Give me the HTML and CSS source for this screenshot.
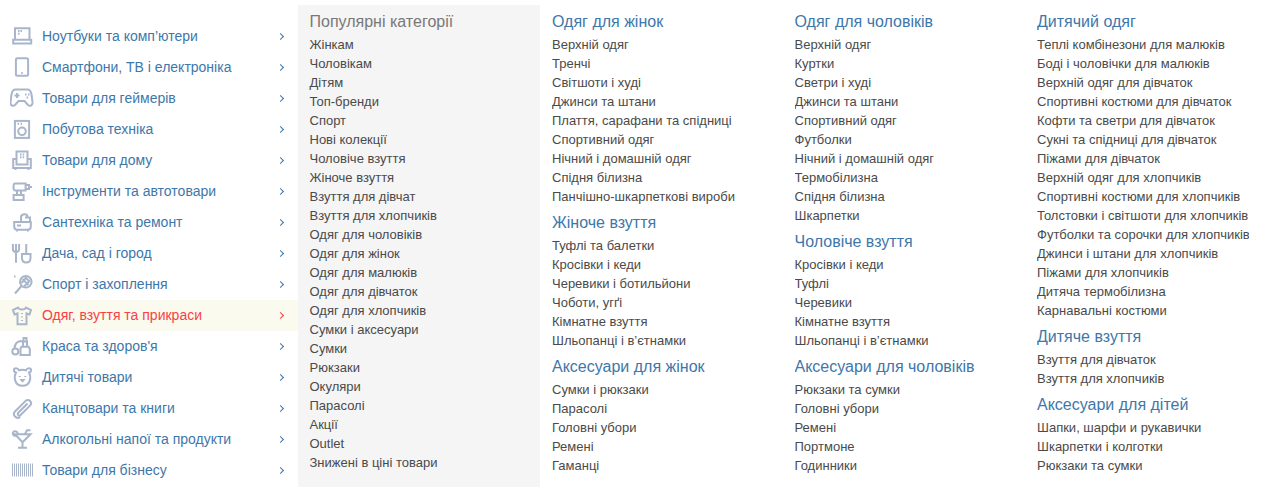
FILE: index.html
```html
<!DOCTYPE html>
<html lang="uk">
<head>
    <meta charset="UTF-8">
    <title>Каталог</title>
    <link rel="stylesheet" href="styles.css">
</head>
<body>
    <div class="menu">
        <ul class="sidebar">
            <li class="side-item">
                <svg class="side-icon" viewBox="0 0 24 24"><path d="M5 4.200h14.500v11.500H5zM3.200 15.700h18v3.800h-18zM8 7h1.500M10.500 7H12M8 9.700h1.500"/></svg>
                <a class="side-link">Ноутбуки та комп’ютери</a><span class="chev"></span>
            </li>
            <li class="side-item">
                <svg class="side-icon" viewBox="0 0 24 24"><rect x="5.900" y="3.200" width="12.200" height="17.600" rx="1.500"/><path d="M11.300 18h1.500"/></svg>
                <a class="side-link">Смартфони, ТВ і електроніка</a><span class="chev"></span>
            </li>
            <li class="side-item">
                <svg class="side-icon" viewBox="0 0 24 24"><path d="M5.500 3.500h12c2.500 0 3.500 2 4 5l1 7.500c.4 3-2.200 5-4.500 3l-3.500-4H8.500L5 19c-2.300 2-4.900 0-4.500-3l1-7.500c.5-3 1.500-5 4-5zM4.500 9.500h5M7 7v5M15 8.500h1.500M18 8.500h1.500M16.500 11.500H18"/></svg>
                <a class="side-link">Товари для геймерів</a><span class="chev"></span>
            </li>
            <li class="side-item">
                <svg class="side-icon" viewBox="0 0 24 24"><rect x="4.900" y="3.900" width="14.200" height="17"/><circle cx="12" cy="14.300" r="3.800"/><path d="M7.500 6.800H9M10.500 6.800H12"/></svg>
                <a class="side-link">Побутова техніка</a><span class="chev"></span>
            </li>
            <li class="side-item">
                <svg class="side-icon" viewBox="0 0 24 24"><path d="M6.500 11V3.600h11V11M3.200 11h3.300v5.500h11V11h3.300v9H3.200zM5.500 20v2M18.500 20v2M10 6.500h1.500M12.700 6.500h1.500M10 9.200h1.500M12.700 9.200h1.500"/></svg>
                <a class="side-link">Товари для дому</a><span class="chev"></span>
            </li>
            <li class="side-item">
                <svg class="side-icon" viewBox="0 0 24 24"><path d="M5 4.600h10.600v6.800H5c-2 0-2-6.800 0-6.800zM15.600 6h3.400v4h-3.400M19 8h3M7 11.400v4.500M11 11.400v4.500M3.600 15.900h10V21h-10z"/></svg>
                <a class="side-link">Інструменти та автотовари</a><span class="chev"></span>
            </li>
            <li class="side-item">
                <svg class="side-icon" viewBox="0 0 24 24"><path d="M4.200 12h16.600v4.500c0 2-1.300 3.300-3.300 3.300h-10c-2 0-3.300-1.300-3.300-3.300zM7 20v1.500M18 20v1.500M11 12V7.500c0-4 6-4.500 6.500-1M15 7.500h5V12M7 15.500h4"/></svg>
                <a class="side-link">Сантехніка та ремонт</a><span class="chev"></span>
            </li>
            <li class="side-item">
                <svg class="side-icon" viewBox="0 0 24 24"><path d="M2.900 3v5c0 2 1.500 3 3.100 3s3.100-1 3.100-3V3M6 3v18.700M12 13h8.500v4c0 3-1.800 4.500-4.250 4.500S12 20 12 17zM16.250 3v10"/></svg>
                <a class="side-link">Дача, сад і город</a><span class="chev"></span>
            </li>
            <li class="side-item">
                <svg class="side-icon" viewBox="0 0 24 24"><circle cx="15.800" cy="9.800" r="5.800"/><path d="M11.500 14L5 21.500M12.500 7l6 6M15 5l5 5M11.500 11l5-6M14 14.500l6-6M4 4.500h1.500"/></svg>
                <a class="side-link">Спорт і захоплення</a><span class="chev"></span>
            </li>
            <li class="side-item active">
                <svg class="side-icon" viewBox="0 0 24 24"><path d="M8 4.600L3 7l1.500 4.500 3-1v10.700h9V10.500l3 1L21 7l-5-2.400c-1 2.400-7 2.400-8 0zM12 10v1M12 13.500v1M12 17v1"/></svg>
                <a class="side-link">Одяг, взуття та прикраси</a><span class="chev"></span>
            </li>
            <li class="side-item">
                <svg class="side-icon" viewBox="0 0 24 24"><path d="M11.500 12.800h7l1.300 2v6.300H10.500v-6.300zM13 12.800V7.500h4v5.300M13.500 7.500V4h3v3.500"/><circle cx="5.300" cy="17.600" r="3"/><path d="M4.500 14.500c0-5 4-8.500 8.500-7"/></svg>
                <a class="side-link">Краса та здоров'я</a><span class="chev"></span>
            </li>
            <li class="side-item">
                <svg class="side-icon" viewBox="0 0 24 24"><path d="M6 7.500C3 6.500 3.500 3.200 6 3.200c1.500 0 2.500 1 3 2 2-.6 5-.6 7 0 .5-1 1.500-2 3-2 2.500 0 3 3.300 0 4.300 2.500 4.500 1.500 13.300-6.500 13.300S3.500 12 6 7.500zM9.700 11v1M15.300 11v1M11.500 15h2l-1 1.200z"/></svg>
                <a class="side-link">Дитячі товари</a><span class="chev"></span>
            </li>
            <li class="side-item">
                <svg class="side-icon" viewBox="0 0 24 24"><path d="M17.500 7.500L8.300 16.700c-1.700 1.700 .6 4 2.300 2.300L20 9.600c3-3-1.300-7.800-4.600-4.500L5.200 15.300c-3.500 3.500 1.300 8.700 5 5.400"/></svg>
                <a class="side-link">Канцтовари та книги</a><span class="chev"></span>
            </li>
            <li class="side-item">
                <svg class="side-icon" viewBox="0 0 24 24"><path d="M5 7.200h15.500l-8 8zM12.500 15.200v5.300M8 20.700h9M15 7l2-3.800h3.500M7.800 6.500C7.300 4.500 5 3.500 3.500 4.800 2 6.200 3 9 5.500 9"/></svg>
                <a class="side-link">Алкогольні напої та продукти</a><span class="chev"></span>
            </li>
            <li class="side-item">
                <svg class="side-icon thin" viewBox="0 0 24 24"><path d="M2.500 5.500v13M4.500 5.500v13M6.500 5.500v13M8.500 5.500v13M10.500 5.500v13M12.500 5.500v13M14.500 5.500v13M16.500 5.500v13M18.500 5.500v13M20.500 5.500v13M22.500 5.500v13"/></svg>
                <a class="side-link">Товари для бізнесу</a><span class="chev"></span>
            </li>
        </ul>

        <div class="popular">
            <h3 class="popular-title">Популярні категорії</h3>
            <ul class="links">
                <li>Жінкам</li>
                <li>Чоловікам</li>
                <li>Дітям</li>
                <li>Топ-бренди</li>
                <li>Спорт</li>
                <li>Нові колекції</li>
                <li>Чоловіче взуття</li>
                <li>Жіноче взуття</li>
                <li>Взуття для дівчат</li>
                <li>Взуття для хлопчиків</li>
                <li>Одяг для чоловіків</li>
                <li>Одяг для жінок</li>
                <li>Одяг для малюків</li>
                <li>Одяг для дівчаток</li>
                <li>Одяг для хлопчиків</li>
                <li>Сумки і аксесуари</li>
                <li>Сумки</li>
                <li>Рюкзаки</li>
                <li>Окуляри</li>
                <li>Парасолі</li>
                <li>Акції</li>
                <li>Outlet</li>
                <li>Знижені в ціні товари</li>
            </ul>
        </div>

        <div class="col">
            <h3 class="col-title">Одяг для жінок</h3>
            <ul class="links">
                <li>Верхній одяг</li>
                <li>Тренчі</li>
                <li>Світшоти і худі</li>
                <li>Джинси та штани</li>
                <li>Плаття, сарафани та спідниці</li>
                <li>Спортивний одяг</li>
                <li>Нічний і домашній одяг</li>
                <li>Спідня білизна</li>
                <li>Панчішно-шкарпеткові вироби</li>
            </ul>
            <h3 class="col-title">Жіноче взуття</h3>
            <ul class="links">
                <li>Туфлі та балетки</li>
                <li>Кросівки і кеди</li>
                <li>Черевики і ботильйони</li>
                <li>Чоботи, угґі</li>
                <li>Кімнатне взуття</li>
                <li>Шльопанці і в’єтнамки</li>
            </ul>
            <h3 class="col-title">Аксесуари для жінок</h3>
            <ul class="links">
                <li>Сумки і рюкзаки</li>
                <li>Парасолі</li>
                <li>Головні убори</li>
                <li>Ремені</li>
                <li>Гаманці</li>
            </ul>
        </div>

        <div class="col">
            <h3 class="col-title">Одяг для чоловіків</h3>
            <ul class="links">
                <li>Верхній одяг</li>
                <li>Куртки</li>
                <li>Светри і худі</li>
                <li>Джинси та штани</li>
                <li>Спортивний одяг</li>
                <li>Футболки</li>
                <li>Нічний і домашній одяг</li>
                <li>Термобілизна</li>
                <li>Спідня білизна</li>
                <li>Шкарпетки</li>
            </ul>
            <h3 class="col-title">Чоловіче взуття</h3>
            <ul class="links">
                <li>Кросівки і кеди</li>
                <li>Туфлі</li>
                <li>Черевики</li>
                <li>Кімнатне взуття</li>
                <li>Шльопанці і в’єтнамки</li>
            </ul>
            <h3 class="col-title">Аксесуари для чоловіків</h3>
            <ul class="links">
                <li>Рюкзаки та сумки</li>
                <li>Головні убори</li>
                <li>Ремені</li>
                <li>Портмоне</li>
                <li>Годинники</li>
            </ul>
        </div>

        <div class="col">
            <h3 class="col-title">Дитячий одяг</h3>
            <ul class="links">
                <li>Теплі комбінезони для малюків</li>
                <li>Боді і чоловічки для малюків</li>
                <li>Верхній одяг для дівчаток</li>
                <li>Спортивні костюми для дівчаток</li>
                <li>Кофти та светри для дівчаток</li>
                <li>Сукні та спідниці для дівчаток</li>
                <li>Піжами для дівчаток</li>
                <li>Верхній одяг для хлопчиків</li>
                <li>Спортивні костюми для хлопчиків</li>
                <li>Толстовки і світшоти для хлопчиків</li>
                <li>Футболки та сорочки для хлопчиків</li>
                <li>Джинси і штани для хлопчиків</li>
                <li>Піжами для хлопчиків</li>
                <li>Дитяча термобілизна</li>
                <li>Карнавальні костюми</li>
            </ul>
            <h3 class="col-title">Дитяче взуття</h3>
            <ul class="links">
                <li>Взуття для дівчаток</li>
                <li>Взуття для хлопчиків</li>
            </ul>
            <h3 class="col-title">Аксесуари для дітей</h3>
            <ul class="links">
                <li>Шапки, шарфи и рукавички</li>
                <li>Шкарпетки і колготки</li>
                <li>Рюкзаки та сумки</li>
            </ul>
        </div>
    </div>
</body>
</html>
```

FILE: styles.css
```css
html, body {
    margin: 0;
    height: 487px;
    overflow: hidden;
    background-color: #fff;
}

body {
    font-family: "Liberation Sans", Arial, sans-serif;
}

ul {
    list-style: none;
    margin: 0;
    padding: 0;
}

.menu {
    display: flex;
    align-items: flex-start;
}

.sidebar {
    width: 298px;
    flex-shrink: 0;
    padding-top: 21px;
}

.side-item {
    display: flex;
    align-items: center;
    height: 31px;
    padding-left: 10px;
}

.side-item.active {
    background-color: #fafaee;
}

.side-icon {
    align-self: flex-start;
    width: 24px;
    height: 24px;
    flex-shrink: 0;
    margin: 3px 8px 0 0;
    fill: none;
    stroke: #a9b5ca;
    stroke-width: 2;
}

.side-icon.thin {
    stroke-width: 1;
}

.side-link {
    flex: 1;
    padding-bottom: 2px;
    font-size: 14px;
    color: #3e77aa;
}

.active .side-link {
    color: #f84147;
}

.chev {
    width: 4px;
    height: 4px;
    margin-right: 15px;
    border-top: 1.3px solid #3e77aa;
    border-right: 1.3px solid #3e77aa;
    transform: rotate(45deg);
}

.active .chev {
    border-color: #f84147;
}

.popular {
    width: 242px;
    height: 482px;
    flex-shrink: 0;
    margin-top: 5px;
    padding: 6.5px 0 0 11.5px;
    box-sizing: border-box;
    background-color: #f5f5f5;
}

.popular-title {
    margin: 0;
    padding-bottom: 4px;
    font-size: 16px;
    font-weight: normal;
    line-height: 19px;
    color: #797878;
}

.links li {
    font-size: 13px;
    line-height: 19px;
    color: #4a4a4a;
    white-space: nowrap;
}

.col {
    width: 212px;
    flex-shrink: 0;
    margin: 11.5px 30.5px 0 0;
    overflow: hidden;
}

.popular + .col {
    margin-left: 12px;
}

.col-title {
    margin: 7px 0 0;
    padding-bottom: 4px;
    font-size: 16px;
    font-weight: normal;
    line-height: 19px;
    color: #3e77aa;
}

.col-title:first-child {
    margin-top: 0;
}
```
